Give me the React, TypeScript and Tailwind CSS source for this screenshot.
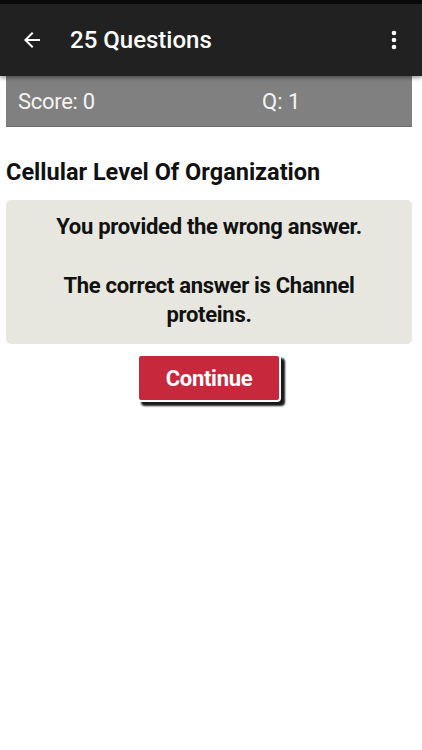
import React from "react";

export default function App() {
  return (
    <div className="w-[422px] h-[750px] bg-white overflow-hidden" style={{ fontFamily: "Roboto, 'Noto Sans', sans-serif" }}>
      <div className="h-[4px] bg-[#0a0a0a]" />
      <div className="h-[72px] bg-[#212121] flex items-center px-[20px] shadow-[0_2px_4px_rgba(0,0,0,0.4)] relative z-10">
        <svg width="24" height="24" viewBox="0 0 24 24" className="mr-[26px]">
          <path d="M20 11H7.83l5.59-5.59L12 4l-8 8 8 8 1.41-1.41L7.83 13H20v-2z" fill="white" />
        </svg>
        <div className="text-white text-[24px] font-medium flex-1">25 Questions</div>
        <svg width="24" height="24" viewBox="0 0 24 24" className="-mr-[4px]">
          <circle cx="12" cy="5" r="2.3" fill="white" />
          <circle cx="12" cy="12" r="2.3" fill="white" />
          <circle cx="12" cy="19" r="2.3" fill="white" />
        </svg>
      </div>
      <div className="ml-[6px] mr-[10px] h-[51px] bg-[#808080] flex items-center text-[22px] text-[#f4f4f4] border-b border-[#6a6a6a]">
        <div className="w-[256px] pl-[12px] tracking-[-0.3px]">Score: 0</div>
        <div>Q: 1</div>
      </div>
      <div className="px-[6px] pt-[30px] text-[23.5px] font-bold text-[#111] leading-[30px]">Cellular Level Of Organization</div>
      <div className="ml-[6px] mr-[10px] mt-[13px] h-[144px] bg-[#e7e7df] rounded-[5px] flex flex-col items-center pt-[12px] text-[22px] font-bold text-[#111] leading-[29px] text-center tracking-[-0.3px]">
        <div>You provided the wrong answer.</div>
        <div className="mt-[30px] px-[40px]">The correct answer is Channel proteins.</div>
      </div>
      <div className="flex justify-center mt-[10px] pr-[4px]">
        <div className="w-[144px] h-[48px] bg-[#c8283c] rounded-[4px] border-2 border-white shadow-[4px_4px_2px_rgba(0,0,0,0.9)] flex items-center justify-center text-white text-[22px] font-bold tracking-[-0.3px]">Continue</div>
      </div>
    </div>
  );
}
